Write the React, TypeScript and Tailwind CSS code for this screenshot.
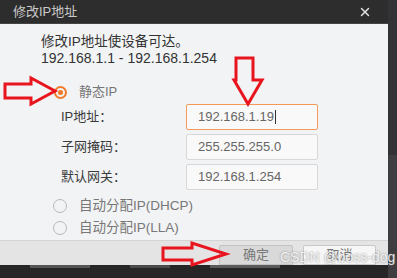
import { X } from 'lucide-react';

const font = "font-['Liberation_Sans','Noto_Sans_CJK_SC',sans-serif]";

function Radio({ checked }: { checked?: boolean }) {
  return checked ? (
    <span className="w-[13px] h-[13px] rounded-full border-2 border-[#f07a28] flex items-center justify-center">
      <span className="w-[5px] h-[5px] rounded-full bg-[#f07a28]" />
    </span>
  ) : (
    <span className="w-[14px] h-[14px] rounded-full border border-[#b8b8b8]" />
  );
}

function Field({ label, value, active }: { label: string; value: string; active?: boolean }) {
  return (
    <div className="flex items-center h-[26px]">
      <span className="w-[125px] text-[13px] text-[#3a3a3a]">{label}</span>
      <div
        className={`w-[132px] h-[26px] flex items-center pl-[11px] text-[13px] text-[#666] bg-[#f9f9f9] rounded-[2px] border ${
          active ? 'border-[#f39a5b]' : 'border-[#d8d8d8]'
        }`}
      >
        {value}
        {active && <span className="w-px h-[14px] bg-[#333] ml-px" />}
      </div>
    </div>
  );
}

export default function App() {
  return (
    <div className={`relative w-[397px] h-[278px] overflow-hidden bg-[#2b2b2b] flex ${font}`}>
      <div className="w-[388px] flex flex-col">
        {/* 标题栏 */}
        <div className="h-[24px] bg-[#2d2d2d] flex items-center justify-between pl-[13px] pr-[16px] border-b border-[#444]">
          <span className="text-[13px] text-[#c9c9c9]">修改IP地址</span>
          <X className="w-[14px] h-[14px] text-[#e0e0e0]" strokeWidth={2.5} />
        </div>

        {/* 内容 */}
        <div className="h-[216px] bg-[#f2f3f5] pt-[10px]">
          <div className="pl-[41px] text-[#333] leading-[16px]">
            <p className="text-[13.5px]">修改IP地址使设备可达。</p>
            <p className="text-[14px]">192.168.1.1 - 192.168.1.254</p>
          </div>

          <div className="mt-[18px] pl-[54px] flex items-center gap-[12px] h-[16px]">
            <Radio checked />
            <span className="text-[13px] text-[#777]">静态IP</span>
          </div>

          <div className="mt-[4px] pl-[61px] flex flex-col gap-[4px]">
            <Field label="IP地址：" value="192.168.1.19" active />
            <Field label="子网掩码：" value="255.255.255.0" />
            <Field label="默认网关：" value="192.168.1.254" />
          </div>

          <div className="mt-[8px] pl-[53px] flex flex-col gap-[6px]">
            <div className="flex items-center gap-[12px] h-[16px]">
              <Radio />
              <span className="text-[13.5px] text-[#777]">自动分配IP(DHCP)</span>
            </div>
            <div className="flex items-center gap-[12px] h-[16px]">
              <Radio />
              <span className="text-[13.5px] text-[#777]">自动分配IP(LLA)</span>
            </div>
          </div>
        </div>

        {/* 底部按钮 */}
        <div className="h-[25px] bg-[#e4e4e4] border-t border-[#d4d4d4] flex items-end justify-end gap-[10px] pr-[12px]">
          <div className="w-[74px] h-[20px] bg-[#d9d9d9] border border-[#c2c2c2] rounded-t-[2px] flex items-center justify-center text-[13px] text-[#777]">
            确定
          </div>
          <div className="w-[73px] h-[20px] bg-[#f6f6f6] border border-[#c8c8c8] rounded-t-[2px] flex items-center justify-center text-[13px] text-[#777]">
            取消
          </div>
        </div>

        <div className="flex-1 bg-[#262626] flex items-start gap-[40px] pl-[30px]">
          <span className="w-[60px] h-[3px] bg-[#555]" />
          <span className="w-[40px] h-[3px] bg-[#4a4a4a]" />
          <span className="w-[70px] h-[3px] bg-[#5a5a5a]" />
        </div>
      </div>

      {/* 右侧暗条 */}
      <div className="flex-1 flex flex-col">
        <div className="h-[155px] bg-[#333335]" />
        <div className="flex-1 bg-[#3e3e40]" />
      </div>

      {/* 红色箭头标注 */}
      <svg className="absolute left-0 top-0 pointer-events-none" width="397" height="278">
        <g fill="none" stroke="#e8141e" strokeWidth="3" strokeLinejoin="miter">
          <polygon points="5,84 31,84 31,78 55,91 31,104 31,98 5,98" />
          <polygon points="236,58 253,58 253,80 262,80 248,104 234,80 236,80" />
          <polygon points="163,248 192,248 192,243 226,254 192,265 192,260 163,260" />
        </g>
      </svg>

      {/* 水印 */}
      <span className="absolute left-[280px] top-[247px] text-[14px] text-[#f4f4f4] opacity-90 font-['Liberation_Sans',sans-serif] [text-shadow:0_0_2px_#777]">
        CSDN @boss-dog
      </span>
    </div>
  );
}
